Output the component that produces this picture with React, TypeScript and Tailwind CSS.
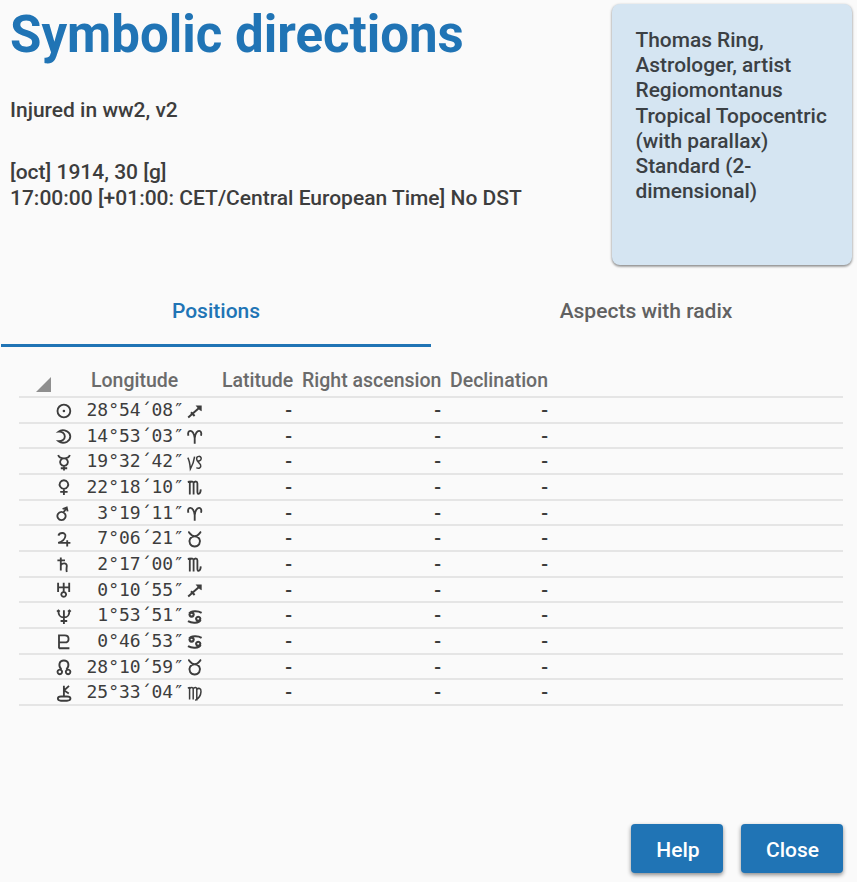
import type { ReactNode } from "react";

const glyphs: Record<string, ReactNode> = {
  sun: (
    <>
      <circle cx="7.9" cy="8" r="6.4" />
      <circle cx="7.9" cy="8" r="1.3" fill="currentColor" stroke="none" />
    </>
  ),
  moon: <path d="M2.6 3.6C4.6 2 8 1.8 11 3.3C15.4 5.8 15.4 11.4 11 13.8C8 15.2 4.6 14.8 2.6 13.2C6 13.3 8.8 11.6 8.8 8.4S6 3.4 2.6 3.6Z" />,
  mercury: <path d="M2.2 1C2.8 3.2 4.4 4.4 8 4.4S13.2 3.2 13.8 1M8 4.4a3.9 3.7 0 1 0 .01 0M8 11.7V16.6M4.8 14.2h6.4" />,
  venus: <path d="M7.9 1.2a4.3 4.3 0 1 0 .01 0M7.9 9.6V16M4.2 12.8h7.4" />,
  mars: <path d="M5.5 6.9a4.1 4.1 0 1 0 .01 0M7.4 7.6L10.4 3.2M6.6 4L10.7 2.4L11.6 6.4" />,
  jupiter: <path d="M2.4 4.6C3.6 1 9.8 1.2 9.4 5C9.1 8 6 10.6 2.2 11.8H14.4M11.2 9.2V15.6" />,
  saturn: <path d="M1.4 4.4H9M4.8 1.4V14.4M4.8 9.2C6.4 6.8 11 6.6 10.8 10C10.7 12.2 10 13.4 10.8 16" />,
  uranus: <path d="M2.1 .8V10M13.2 .8V10M2.1 5.4H13.2M7.7 .8V10.2M7.7 10a2.4 2.4 0 1 0 .01 0" />,
  neptune: <path d="M2.4 2.6C2.4 7.2 3.4 9.4 7.9 9.4S13.4 7.2 13.4 2.6M7.9 2.2V16M4.6 13H11.2M1 3.6L2.4 2.4L3.8 3.6M12 3.6L13.4 2.4L14.8 3.6" />,
  pluto: <path d="M3 15.4V2.4H8.8C13.8 2.4 13.8 9.4 8.8 9.4H3M3 15.2H13.4" />,
  node: <path d="M5.4 10.6C1.8 6.4 3.2 1.5 7.9 1.5S14 6.4 10.4 10.6M3.8 10.6a2.3 2.3 0 1 0 .01 0M12.1 10.6a2.3 2.3 0 1 0 .01 0" />,
  chiron: <path d="M7.9 .8V11.2M13 .8L8.2 5.4L12.8 8.4M5 11.5H11C15.6 11.5 15.6 15.7 11 15.7H5C.8 15.7 .8 11.5 5 11.5Z" />,
  sagittarius: (
    <>
      <path d="M1.2 14.4L12 5M4 9.2L7.6 13" strokeWidth="2" />
      <path d="M8.6 2.4H14.7V8.2L12.8 7.2L10.4 4.8Z" fill="currentColor" stroke="none" />
    </>
  ),
  aries: <path d="M1.4 7.8C-.4 1.6 6.2 .2 7.7 10V15.8M7.7 10C9.2 .2 15.8 1.6 14 7.8" />,
  capricorn: <path d="M.8 3.6C2.2 6 3 10 3.4 15C5.4 11.4 7 7 7.6 2.6M9.4 13.6C12 15.2 14.4 13.4 13.6 11C13 9.2 9.6 8 9.6 4.8C9.6 1.6 14.2 1.6 14.2 4.6C14.2 7 11.4 7.4 10.2 6.6" strokeWidth="1.5" />,
  scorpio: <path d="M.8 3L2.8 2.6V15.4M2.8 3.8C4.4 1.8 6.6 2.2 6.6 4.4V15.4M6.6 3.8C8.2 1.8 10.4 2.2 10.4 4.4V13C10.4 15.8 13.4 15.8 13.8 10.4" strokeWidth="1.8" />,
  taurus: <path d="M1.2 1C3.2 1.4 3.4 5.3 7.7 5.3S12.2 1.4 14.2 1M7.7 5.3a5.3 5.1 0 1 0 .01 0" strokeWidth="1.9" />,
  cancer: <path d="M14.6 4.8C11 2.6 4 2.6 2.2 5.6M4.6 4.6a2.1 2 0 1 0 .01 0M1 13.2C5 15.6 12 15.4 13.6 12M11.2 8.8a2.1 2 0 1 0 .01 0" strokeWidth="2.1" />,
  virgo: <path d="M.8 3L2.6 2.6V14.4M2.6 3.8C4 1.8 6.2 2.2 6.2 4.4V14.4M6.2 3.8C7.6 1.8 9.8 2.2 9.8 4.4V15.4M9.8 4.4C11.4 2.6 14.2 3.2 14 6.6C13.8 10.4 11.6 13.6 8.2 15.4" strokeWidth="1.5" />,
};

function Glyph({ name }: { name: string }) {
  return (
    <svg viewBox="0 0 16 16" className="size-4 overflow-visible" fill="none" stroke="currentColor" strokeWidth="1.85">
      {glyphs[name]}
    </svg>
  );
}

const rows = [
  ["sun", "28°54´08″", "sagittarius"],
  ["moon", "14°53´03″", "aries"],
  ["mercury", "19°32´42″", "capricorn"],
  ["venus", "22°18´10″", "scorpio"],
  ["mars", "3°19´11″", "aries"],
  ["jupiter", "7°06´21″", "taurus"],
  ["saturn", "2°17´00″", "scorpio"],
  ["uranus", "0°10´55″", "sagittarius"],
  ["neptune", "1°53´51″", "cancer"],
  ["pluto", "0°46´53″", "cancer"],
  ["node", "28°10´59″", "taurus"],
  ["chiron", "25°33´04″", "virgo"],
];

const columns = "grid grid-cols-[35px_32px_98px_17px_91px_149px_107px_1fr]";

export default function App() {
  return (
    <div className="flex h-[882px] w-[857px] flex-col overflow-hidden bg-[#fafafa] font-['Roboto',sans-serif] text-[21px] font-medium text-[#3d3d3d]">
      <header className="flex h-[275px] shrink-0 justify-between pr-[5px] pl-[10px]">
        <div className="whitespace-nowrap">
          <h1 className="mt-[3px] text-[51px] leading-[64px] font-bold text-[#2074b5]">Symbolic directions</h1>
          <p className="mt-[30px] leading-[26px]">Injured in ww2, v2</p>
          <p className="mt-[36px] leading-[26px]">[oct] 1914, 30 [g]</p>
          <p className="leading-[26px]">17:00:00 [+01:00: CET/Central European Time] No DST</p>
        </div>
        <aside className="mt-[4px] h-[261px] w-[240px] rounded-[8px] bg-[#d5e5f2] pt-[24px] pl-[23.5px] text-[20.9px] leading-[25.2px] whitespace-nowrap text-[#3b4044] shadow-[0_1px_3px_rgba(0,0,0,0.4),0_2px_2px_rgba(0,0,0,0.15)]">
          <p>Thomas Ring,</p>
          <p>Astrologer, artist</p>
          <p>Regiomontanus</p>
          <p>Tropical Topocentric</p>
          <p>(with parallax)</p>
          <p>Standard (2-</p>
          <p>dimensional)</p>
        </aside>
      </header>
      <nav className="flex h-[72px] shrink-0 pl-px text-center leading-[72px]">
        <div className="w-[430px] shrink-0 border-b-[3px] border-[#2074b5] text-[#2074b5]">Positions</div>
        <div className="w-[430px] shrink-0 text-[#616161]">Aspects with radix</div>
      </nav>
      <main className="mr-[14px] ml-[19px] grow">
        <div className="flex h-[51px] items-end border-b-2 border-[#e5e5e5] pb-[2px] text-[19.5px] leading-[26px] whitespace-nowrap text-[#6b6b6b]">
          <svg className="mb-[2px] ml-[17px] h-[15px] w-[15px]" viewBox="0 0 15 15">
            <path d="M15 0V15H0Z" fill="#8f8f8f" />
          </svg>
          <span className="ml-[40px] w-[131px]">Longitude</span>
          <span className="w-[80px]">Latitude</span>
          <span className="w-[148px]">Right ascension</span>
          <span>Declination</span>
        </div>
        {rows.map(([planet, value, sign]) => (
          <div key={planet} className={`${columns} h-[25.67px] border-b-2 border-[#e5e5e5] text-[20px] leading-[25px]`}>
            <span />
            <span className="pt-[4.5px] pl-[2px]"><Glyph name={planet} /></span>
            <span className="text-right font-['DejaVu_Sans_Mono',monospace] text-[18px] leading-[24px] font-normal whitespace-nowrap">{value}</span>
            <span className="pt-[4.5px] pl-[3px]"><Glyph name={sign} /></span>
            <span className="text-right">-</span>
            <span className="text-right">-</span>
            <span className="text-right">-</span>
          </div>
        ))}
      </main>
      <footer className="flex h-[58px] shrink-0 justify-end gap-[18px] pr-[14px] text-white">
        <button className="h-[49px] w-[92px] rounded-[4px] bg-[#2074b5] pt-[3px] pb-px pl-[2px] leading-[26px] shadow-[0_2px_4px_rgba(0,0,0,0.45)]">Help</button>
        <button className="h-[49px] w-[102px] rounded-[4px] bg-[#2074b5] pt-[3px] pb-px pl-px leading-[26px] shadow-[0_2px_4px_rgba(0,0,0,0.45)]">Close</button>
      </footer>
    </div>
  );
}
